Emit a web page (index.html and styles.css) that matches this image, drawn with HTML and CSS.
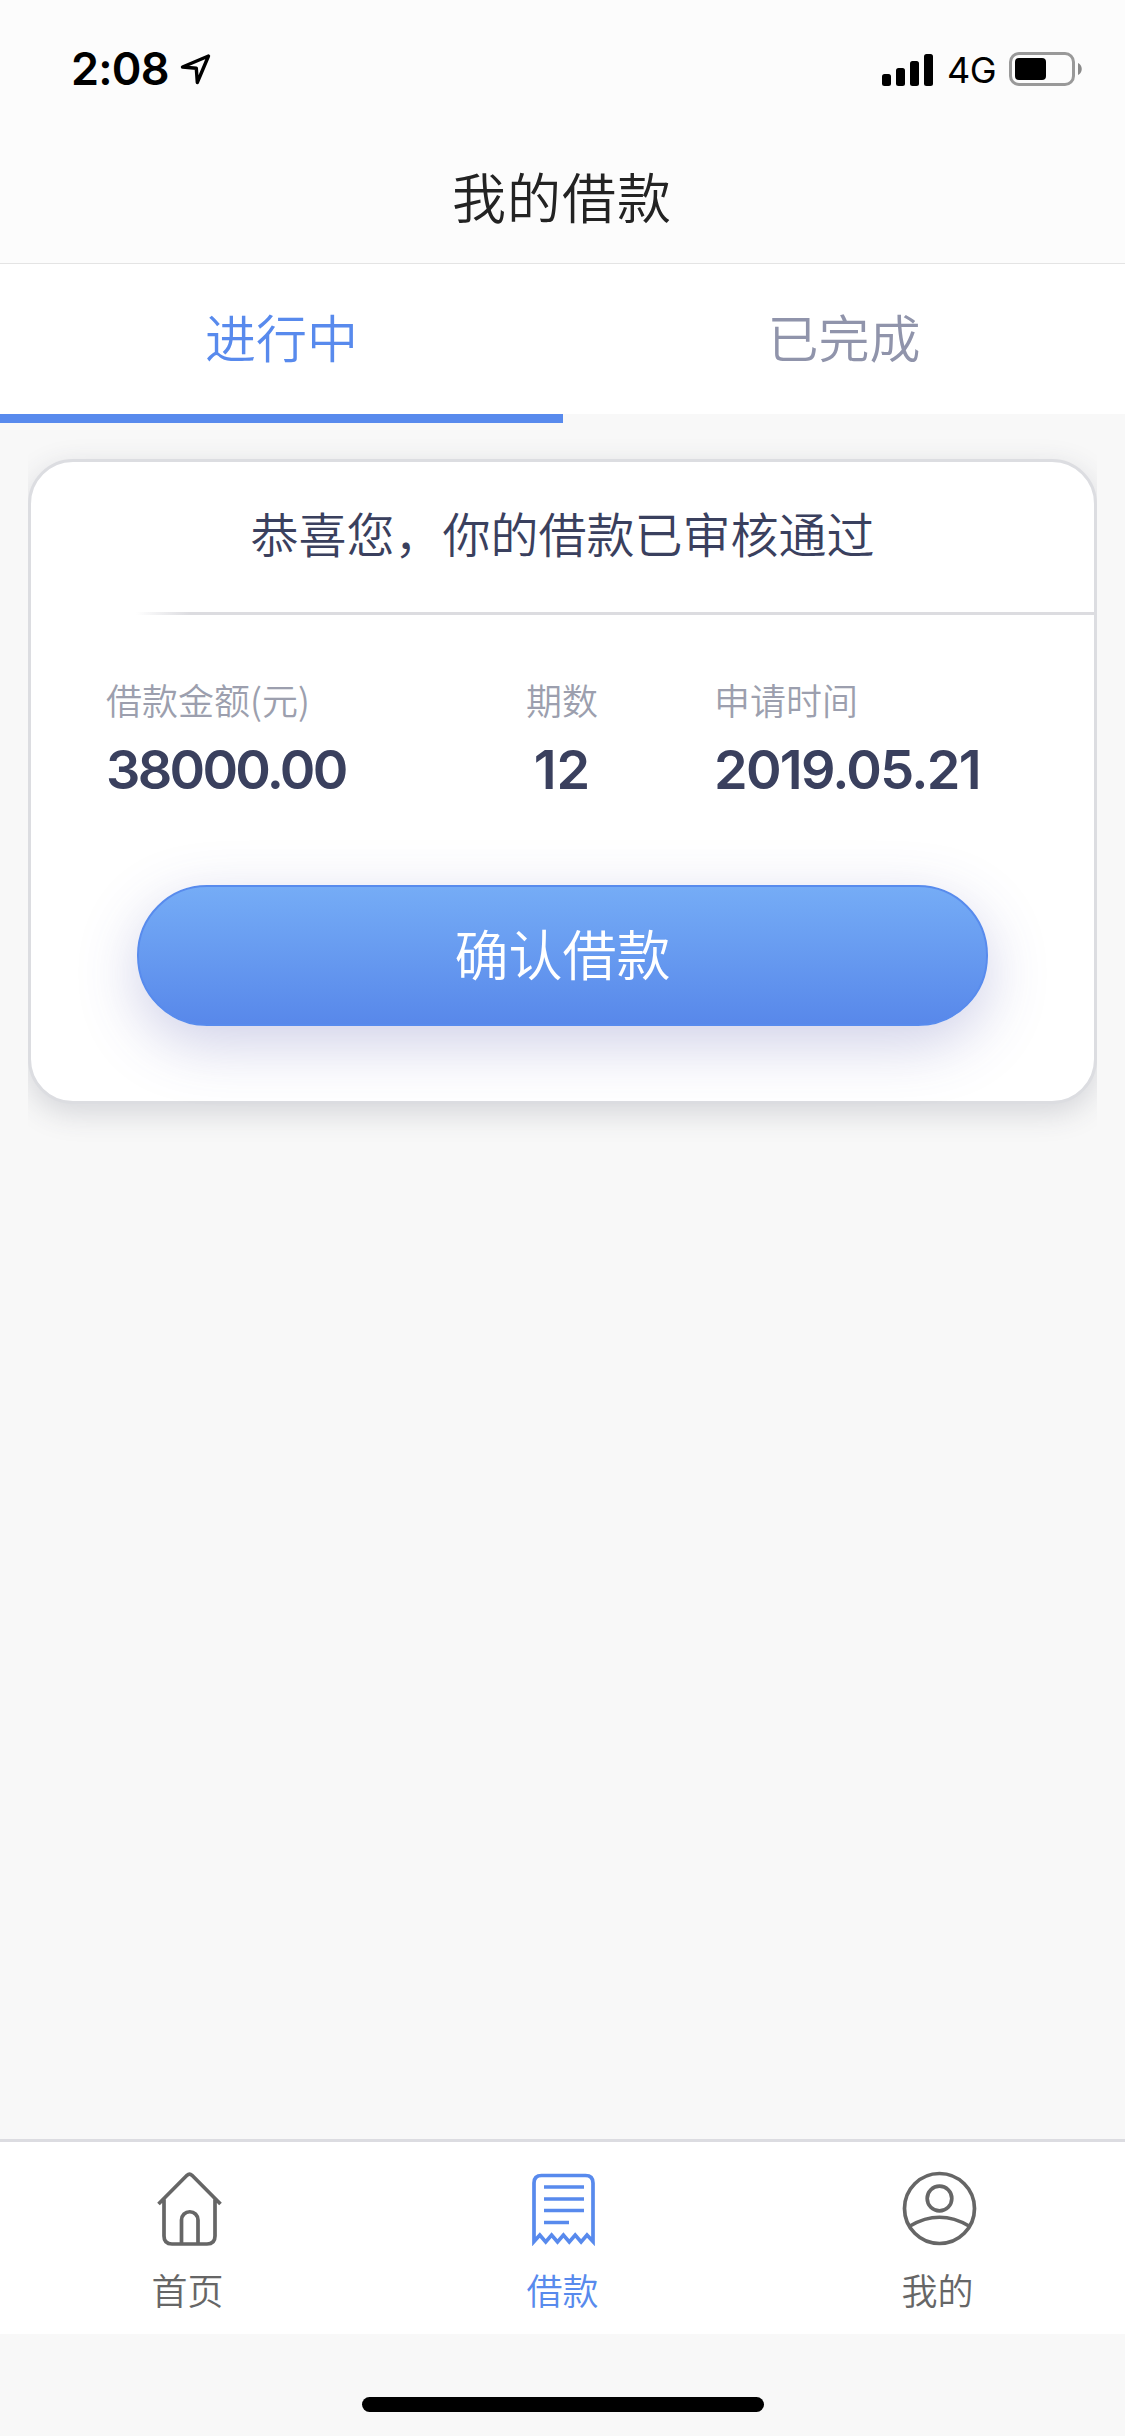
FILE: index.html
```html
<!DOCTYPE html>
<html lang="zh-CN">
<head>
<meta charset="utf-8">
<title>我的借款</title>
<link rel="stylesheet" href="styles.css">
</head>
<body>
<div class="screen">
  <header class="header">
    <div class="status">
      <span class="time">2:08</span>
      <svg class="location" width="32" height="32" viewBox="0 0 32 32"><path d="M29.500 3 3.500 14 17.300 15.200 18.300 29.500Z" fill="none" stroke="#000" stroke-width="3.400" stroke-linejoin="round"/></svg>
      <div class="status-right">
        <svg class="signal" width="51" height="33" viewBox="0 0 51 33"><rect y="21" width="9" height="12" rx="2.500"/><rect x="14" y="15" width="9" height="18" rx="2.500"/><rect x="28" y="8" width="9" height="25" rx="2.500"/><rect x="42" y="1" width="9" height="32" rx="2.500"/></svg>
        <span class="network">4G</span>
        <svg class="battery" width="74" height="34" viewBox="0 0 74 34"><rect x="1.500" y="1.500" width="63" height="31" rx="8.500" fill="none" stroke="#999" stroke-width="3"/><rect x="6" y="6" width="31" height="22" rx="4" fill="#000"/><path d="M69 11c5 2 5 10 0 12z" fill="#8a8a8a"/></svg>
      </div>
    </div>
    <h1 class="title">我的借款</h1>
  </header>
  <nav class="tabs">
    <a class="tab tab-active">进行中</a>
    <a class="tab">已完成</a>
  </nav>
  <main class="content">
    <section class="card">
      <h2 class="message">恭喜您，你的借款已审核通过</h2>
      <div class="divider"></div>
      <div class="details">
        <div class="detail amount"><span class="label">借款金额(元)</span><strong class="value">38000.00</strong></div>
        <div class="detail periods"><span class="label">期数</span><strong class="value">12</strong></div>
        <div class="detail date"><span class="label">申请时间</span><strong class="value">2019.05.21</strong></div>
      </div>
      <button class="confirm">确认借款</button>
    </section>
  </main>
  <nav class="tabbar">
    <a class="item">
      <svg class="icon" width="75" height="75" viewBox="0 0 75 75"><path d="M6.500 33 35 4.300Q37.500 2 40 4.300L68.500 33M12 28.500V65Q12 73 20 73H55Q63 73 63 65V28.500M29.500 73V49a8.250 8.250 0 0 1 16.500 0V73"/></svg>
      <span>首页</span>
    </a>
    <a class="item item-active">
      <svg class="icon" width="75" height="75" viewBox="0 0 75 75"><path d="M7 70.500V12Q7 4.500 14.500 4.500H58.500Q66 4.500 66 12V70.500L60 64 54.100 71 48.200 64 42.300 71 36.400 64 30.500 71 24.600 64 18.700 71 12.800 64ZM17 16H57M17 28H57M17 39.500H57M17 51.500H42"/></svg>
      <span>借款</span>
    </a>
    <a class="item">
      <svg class="icon" width="75" height="75" viewBox="0 0 75 75"><circle cx="37.500" cy="37.500" r="35"/><circle cx="37.500" cy="27.500" r="12.300"/><path d="M8 55Q37.500 37.500 67 55"/></svg>
      <span>我的</span>
    </a>
  </nav>
  <footer class="home-area"><div class="home-indicator"></div></footer>
</div>
</body>
</html>
```
FILE: styles.css
```css
* { box-sizing: border-box; }

body {
  margin: 0;
  background: #f8f8f8;
  font-family: "Noto Sans CJK SC", sans-serif;
  font-weight: 350;
}

.screen {
  display: flex;
  flex-direction: column;
  width: 1125px;
  height: 2436px;
  background: #f8f8f8;
  overflow: hidden;
}

/* Header */
.header {
  height: 264px;
  background: #fcfcfc;
  border-bottom: 1px solid #e4e4e4;
}

.status {
  display: flex;
  align-items: center;
  height: 132px;
  padding: 6px 42px 0 71px;
}

.time {
  width: 108px;
  font: 600 45px/54px Inter, sans-serif;
  letter-spacing: -0.8px;
  white-space: nowrap;
}

.status-right {
  display: flex;
  align-items: center;
  margin-left: auto;
}

.network {
  width: 61px;
  margin-left: 14px;
  margin-right: 1px;
  font: 400 36px/44px Inter, sans-serif;
  letter-spacing: -0.5px;
  padding-top: 2px;
}

.title {
  margin: 0;
  padding: 24px 1px 0 0;
  text-align: center;
  font-size: 54px;
  font-weight: 350;
  line-height: 80px;
  letter-spacing: 1px;
  color: #232323;
}

/* Tabs */
.tabs {
  display: grid;
  grid-template-columns: 563px 562px;
  height: 159px;
}

.tab {
  padding-bottom: 1px;
  border-bottom: 9px solid #f8f8f8;
  background: #fff;
  text-align: center;
  font-size: 51px;
  line-height: 144px;
  color: #9094ab;
}

.tab-active {
  border-color: #588aed;
  color: #588aed;
}

/* Loan card */
.content {
  flex: 1;
  padding: 36px 28px 0;
}

.card {
  height: 645px;
  border: 3px solid #dcdde1;
  border-radius: 45px;
  background: #fff;
  box-shadow: 0 9px 30px rgba(57, 63, 84, 0.18);
  clip-path: inset(-60px 0);
}

.message {
  margin: 0;
  height: 150px;
  text-align: center;
  font-size: 48px;
  font-weight: 350;
  line-height: 140px;
  color: #3a405e;
}

.divider {
  height: 3px;
  margin-left: 105px;
  background: linear-gradient(90deg, rgba(220, 220, 224, 0), #dcdce0 54px);
}

.details {
  display: grid;
  grid-template-columns: 285px 342px 1fr;
  height: 270px;
  padding: 56px 0 0 75px;
}

.detail {
  display: flex;
  flex-direction: column;
}

.periods {
  align-items: center;
}

.date {
  margin-left: -19px;
}

.label {
  font-size: 36px;
  line-height: 56px;
  color: #9c9fae;
}

.value {
  margin-top: 10px;
  font: 600 54px/66px Inter, sans-serif;
  color: #3a405e;
}

.amount .value { letter-spacing: -2.7px; }
.date .value { letter-spacing: -1.7px; }

.confirm {
  display: block;
  width: 851px;
  height: 141px;
  margin: 0 auto;
  padding: 0 0 5px;
  border: 2px solid #588bed;
  border-radius: 70px;
  background: linear-gradient(#75acf6, #5888ea);
  box-shadow: 0 18px 60px rgba(70, 75, 165, 0.26);
  font: 350 54px/80px "Noto Sans CJK SC", sans-serif;
  color: #fff;
}

/* Bottom navigation */
.tabbar {
  display: grid;
  grid-template-columns: repeat(3, 1fr);
  height: 195px;
  border-top: 3px solid #dcdce1;
  background: #fff;
}

.item {
  display: flex;
  flex-direction: column;
  align-items: center;
  padding-top: 29px;
  font-size: 36px;
  line-height: 52px;
  color: #666;
}

.item-active {
  color: #588aed;
}

.icon {
  margin: 0 0 17px 3px;
  fill: none;
  stroke: currentColor;
  stroke-width: 3.7px;
}

.home-area {
  height: 102px;
  padding-top: 63px;
}

.home-indicator {
  width: 402px;
  height: 15px;
  margin: 0 auto;
  border-radius: 8px;
  background: #000;
}
```
